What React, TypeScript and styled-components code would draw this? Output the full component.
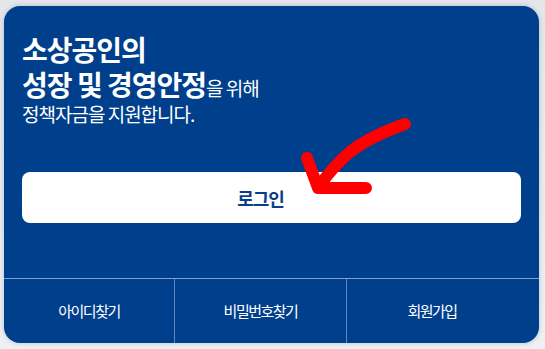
import React from "react";
import styled, { createGlobalStyle } from "styled-components";

const Global = createGlobalStyle`
  html, body { margin: 0; padding: 0; }
  body {
    background: #e6eaef;
    font-family: "Noto Sans CJK KR", "Noto Sans", sans-serif;
  }
`;

const Page = styled.div`
  width: 545px;
  height: 349px;
  padding: 6px 6px 6px 4px;
  box-sizing: border-box;
  background: linear-gradient(180deg, #e3e7ec 0%, #eef1f4 100%);
`;

const Card = styled.section`
  position: relative;
  width: 535px;
  height: 337px;
  background: #003f8c;
  border-radius: 16px;
  box-shadow: 0 0 5px rgba(40, 60, 90, 0.25);
  display: flex;
  flex-direction: column;
  overflow: hidden;
`;

const Top = styled.div`
  flex: 1;
  padding: 27px 18px 0 18px;
  display: flex;
  flex-direction: column;
`;

const Title = styled.h2`
  margin: 0;
  color: #fff;
  font-size: 28px;
  line-height: 32px;
  font-weight: 700;
  letter-spacing: -1px;
  display: flex;
  flex-direction: column;
  gap: 3px;
`;

const TitleLine = styled.span`
  display: block;
  white-space: nowrap;
`;

const Small = styled.span`
  font-size: 19px;
  line-height: 20px;
  font-weight: 400;
  letter-spacing: -1px;
`;

const Sub = styled.p`
  margin: 2px 0 0 0;
  color: #fff;
  font-size: 19px;
  line-height: 24px;
  font-weight: 400;
  letter-spacing: -1px;
`;

const LoginButton = styled.button`
  margin-top: 46px;
  height: 51px;
  width: 100%;
  flex-shrink: 0;
  border: 0;
  border-radius: 8px;
  background: #fff;
  color: #0b3e86;
  font-family: inherit;
  font-size: 18px;
  font-weight: 700;
  letter-spacing: -1px;
  padding: 0 22px 0 0;
  cursor: pointer;
`;

const Nav = styled.nav`
  height: 64px;
  flex-shrink: 0;
  border-top: 1px solid rgba(170, 195, 230, 0.75);
  display: grid;
  grid-template-columns: 170px 172px 1fr;
`;

const NavItem = styled.a<{ $first?: boolean; $last?: boolean }>`
  display: flex;
  align-items: center;
  justify-content: center;
  color: #fff;
  font-size: 15px;
  letter-spacing: -1.5px;
  text-decoration: none;
  border-left: ${(p) => (p.$first ? "0" : "1px solid rgba(170, 195, 230, 0.55)")};
  padding-right: ${(p) => (p.$last ? "22px" : "0")};
  padding-bottom: 2px;
`;

const Arrow = styled.svg`
  position: absolute;
  left: -4px;
  top: -6px;
  pointer-events: none;
`;

export default function App() {
  return (
    <>
      <Global />
      <Page>
        <Card>
          <Top>
            <Title>
              <TitleLine>소상공인의</TitleLine>
              <TitleLine>
                성장 및 경영안정<Small>을 위해</Small>
              </TitleLine>
            </Title>
            <Sub>정책자금을 지원합니다.</Sub>
            <LoginButton>로그인</LoginButton>
          </Top>
          <Nav>
            <NavItem $first>아이디찾기</NavItem>
            <NavItem>비밀번호찾기</NavItem>
            <NavItem $last>회원가입</NavItem>
          </Nav>
          <Arrow width="545" height="349" viewBox="0 0 545 349">
            <path
              d="M405 124 C388 130 368 138 350 152 C338 162 328 174 319 186"
              fill="none"
              stroke="#ff0000"
              strokeWidth="12"
              strokeLinecap="round"
            />
            <path
              d="M307 158 L318 188 L366 188"
              fill="none"
              stroke="#ff0000"
              strokeWidth="12"
              strokeLinecap="round"
              strokeLinejoin="round"
            />
          </Arrow>
        </Card>
      </Page>
    </>
  );
}
